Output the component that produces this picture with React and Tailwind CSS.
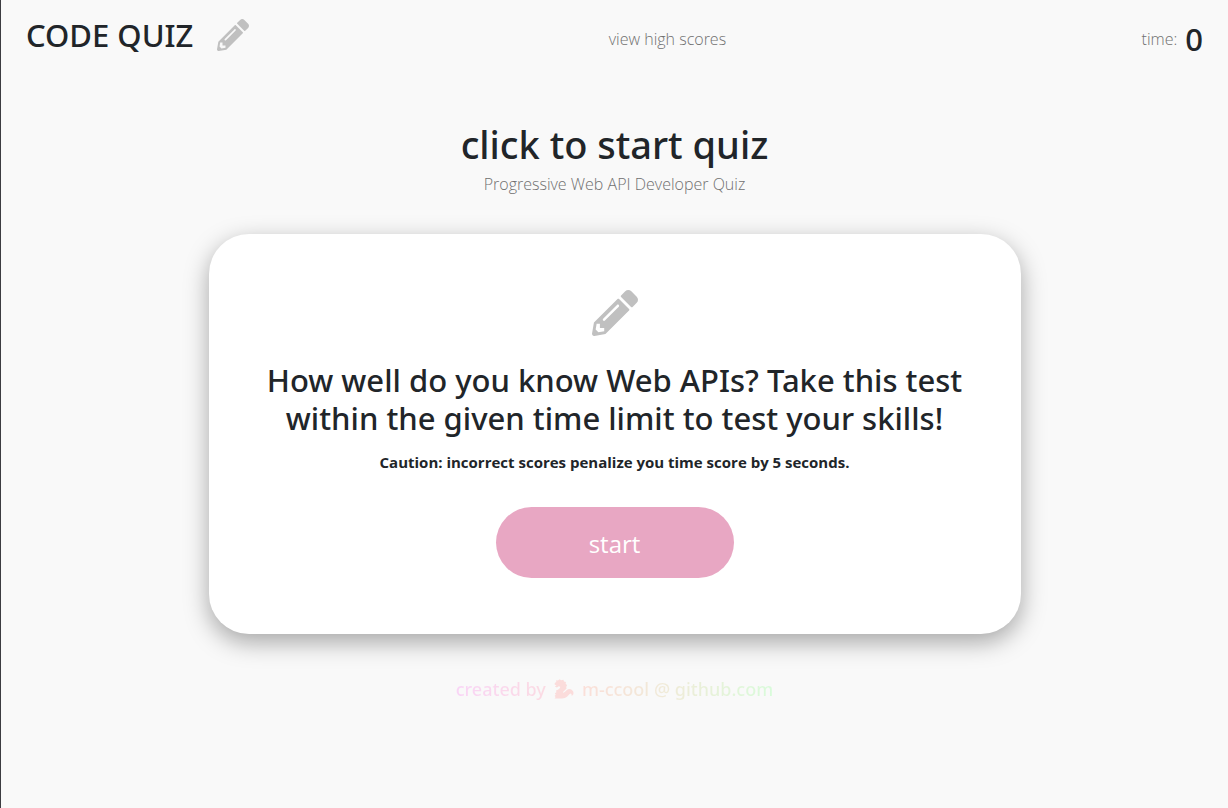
import { FaPencilAlt } from "react-icons/fa";

function Dragon() {
  return (
    <svg viewBox="0 0 20 20" className="size-5 shrink-0" fill="#fbdcdb" aria-hidden="true">
      <path d="M.6 4.4 2.4 2.6 2 1.2 4 1.6 5.6.2 7 1.2 9.4.8 10 2.4 12 3 11.6 4.6 13 6.2 12.2 8 12.6 9.4 10.8 11.2 9 13 Q9 14.2 10.4 13.2 L12.6 11.2 Q14.8 9.4 17.2 10.4 Q20 12 19.4 15.2 L17.8 17 17.4 15 Q16.6 14 15.4 15.2 L13 17.8 Q11.2 19.6 8 19.6 L.6 19.6 1.6 18 .6 17 1.8 15.8 .8 14.4 2.4 13.2 2 11.6 4 10.8 6 9 6.2 7.8 4.8 7.2 2.8 8.4 .8 7.6 2.6 6.2 .8 5.8Z" />
    </svg>
  );
}

export default function App() {
  return (
    <div className="flex min-h-screen flex-col border-l border-[#3c3c41] bg-[#f9f9f9] font-['Open_Sans','Noto_Sans',sans-serif] text-[#212529]">
      <header className="flex items-end justify-between px-[25px] pt-[15px]">
        <div className="flex items-center gap-6 pb-1">
          <h1 className="font-['Noto_Sans',sans-serif] text-[31px] leading-10 font-medium whitespace-nowrap">CODE QUIZ</h1>
          <FaPencilAlt className="size-8 text-[#c0c0c0]" />
        </div>
        <a href="#scores" className="pb-2 text-base leading-6 font-light text-[#707070]">
          view high scores
        </a>
        <p className="flex items-center gap-2 pl-14">
          <span className="text-base font-light text-[#707070]">time:</span>
          <span className="font-['Noto_Sans',sans-serif] text-[31px] leading-10 font-medium">0</span>
        </p>
      </header>

      <main className="flex flex-col items-center px-6 pt-[61px]">
        <h2 className="text-center font-['Noto_Sans',sans-serif] text-[38px] leading-12 font-medium">click to start quiz</h2>
        <p className="mt-1 text-center text-base leading-6 font-light text-[#707070]">
          Progressive Web API Developer Quiz
        </p>

        <section className="mt-[38px] flex w-full max-w-[812px] flex-col items-center rounded-[40px] bg-white px-14 py-14 shadow-[0_8px_24px_rgba(0,0,0,0.34)]">
          <FaPencilAlt className="size-[46px] text-[#c0c0c0]" />
          <h3 className="mt-[25px] text-center font-['Noto_Sans',sans-serif] text-[31px] leading-[38px] font-medium">
            How well do you know Web APIs? Take this test within the given time limit to test your skills!
          </h3>
          <p className="mt-[13px] text-center text-[15px] leading-6 font-bold">
            Caution: incorrect scores penalize you time score by 5 seconds.
          </p>
          <button
            type="button"
            className="mt-[33px] w-[238px] rounded-[36px] bg-[#e8a7c3] pt-[17px] pb-[14px] text-[24px] leading-10 text-white"
          >
            start
          </button>
        </section>
      </main>

      <footer className="mt-[43px] flex items-center justify-center gap-2 px-6 font-['Noto_Sans',sans-serif] text-lg leading-6 font-medium">
        <span className="bg-linear-to-r from-[#f9d5f6] to-[#fbdbe3] bg-clip-text text-transparent">created by</span>
        <Dragon />
        <a
          href="https://github.com/m-ccool"
          className="bg-linear-to-r from-[#fbdfd9] via-[#eeecd8] to-[#d9fbdb] bg-clip-text text-transparent"
        >
          m-ccool @ github.com
        </a>
      </footer>
    </div>
  );
}
